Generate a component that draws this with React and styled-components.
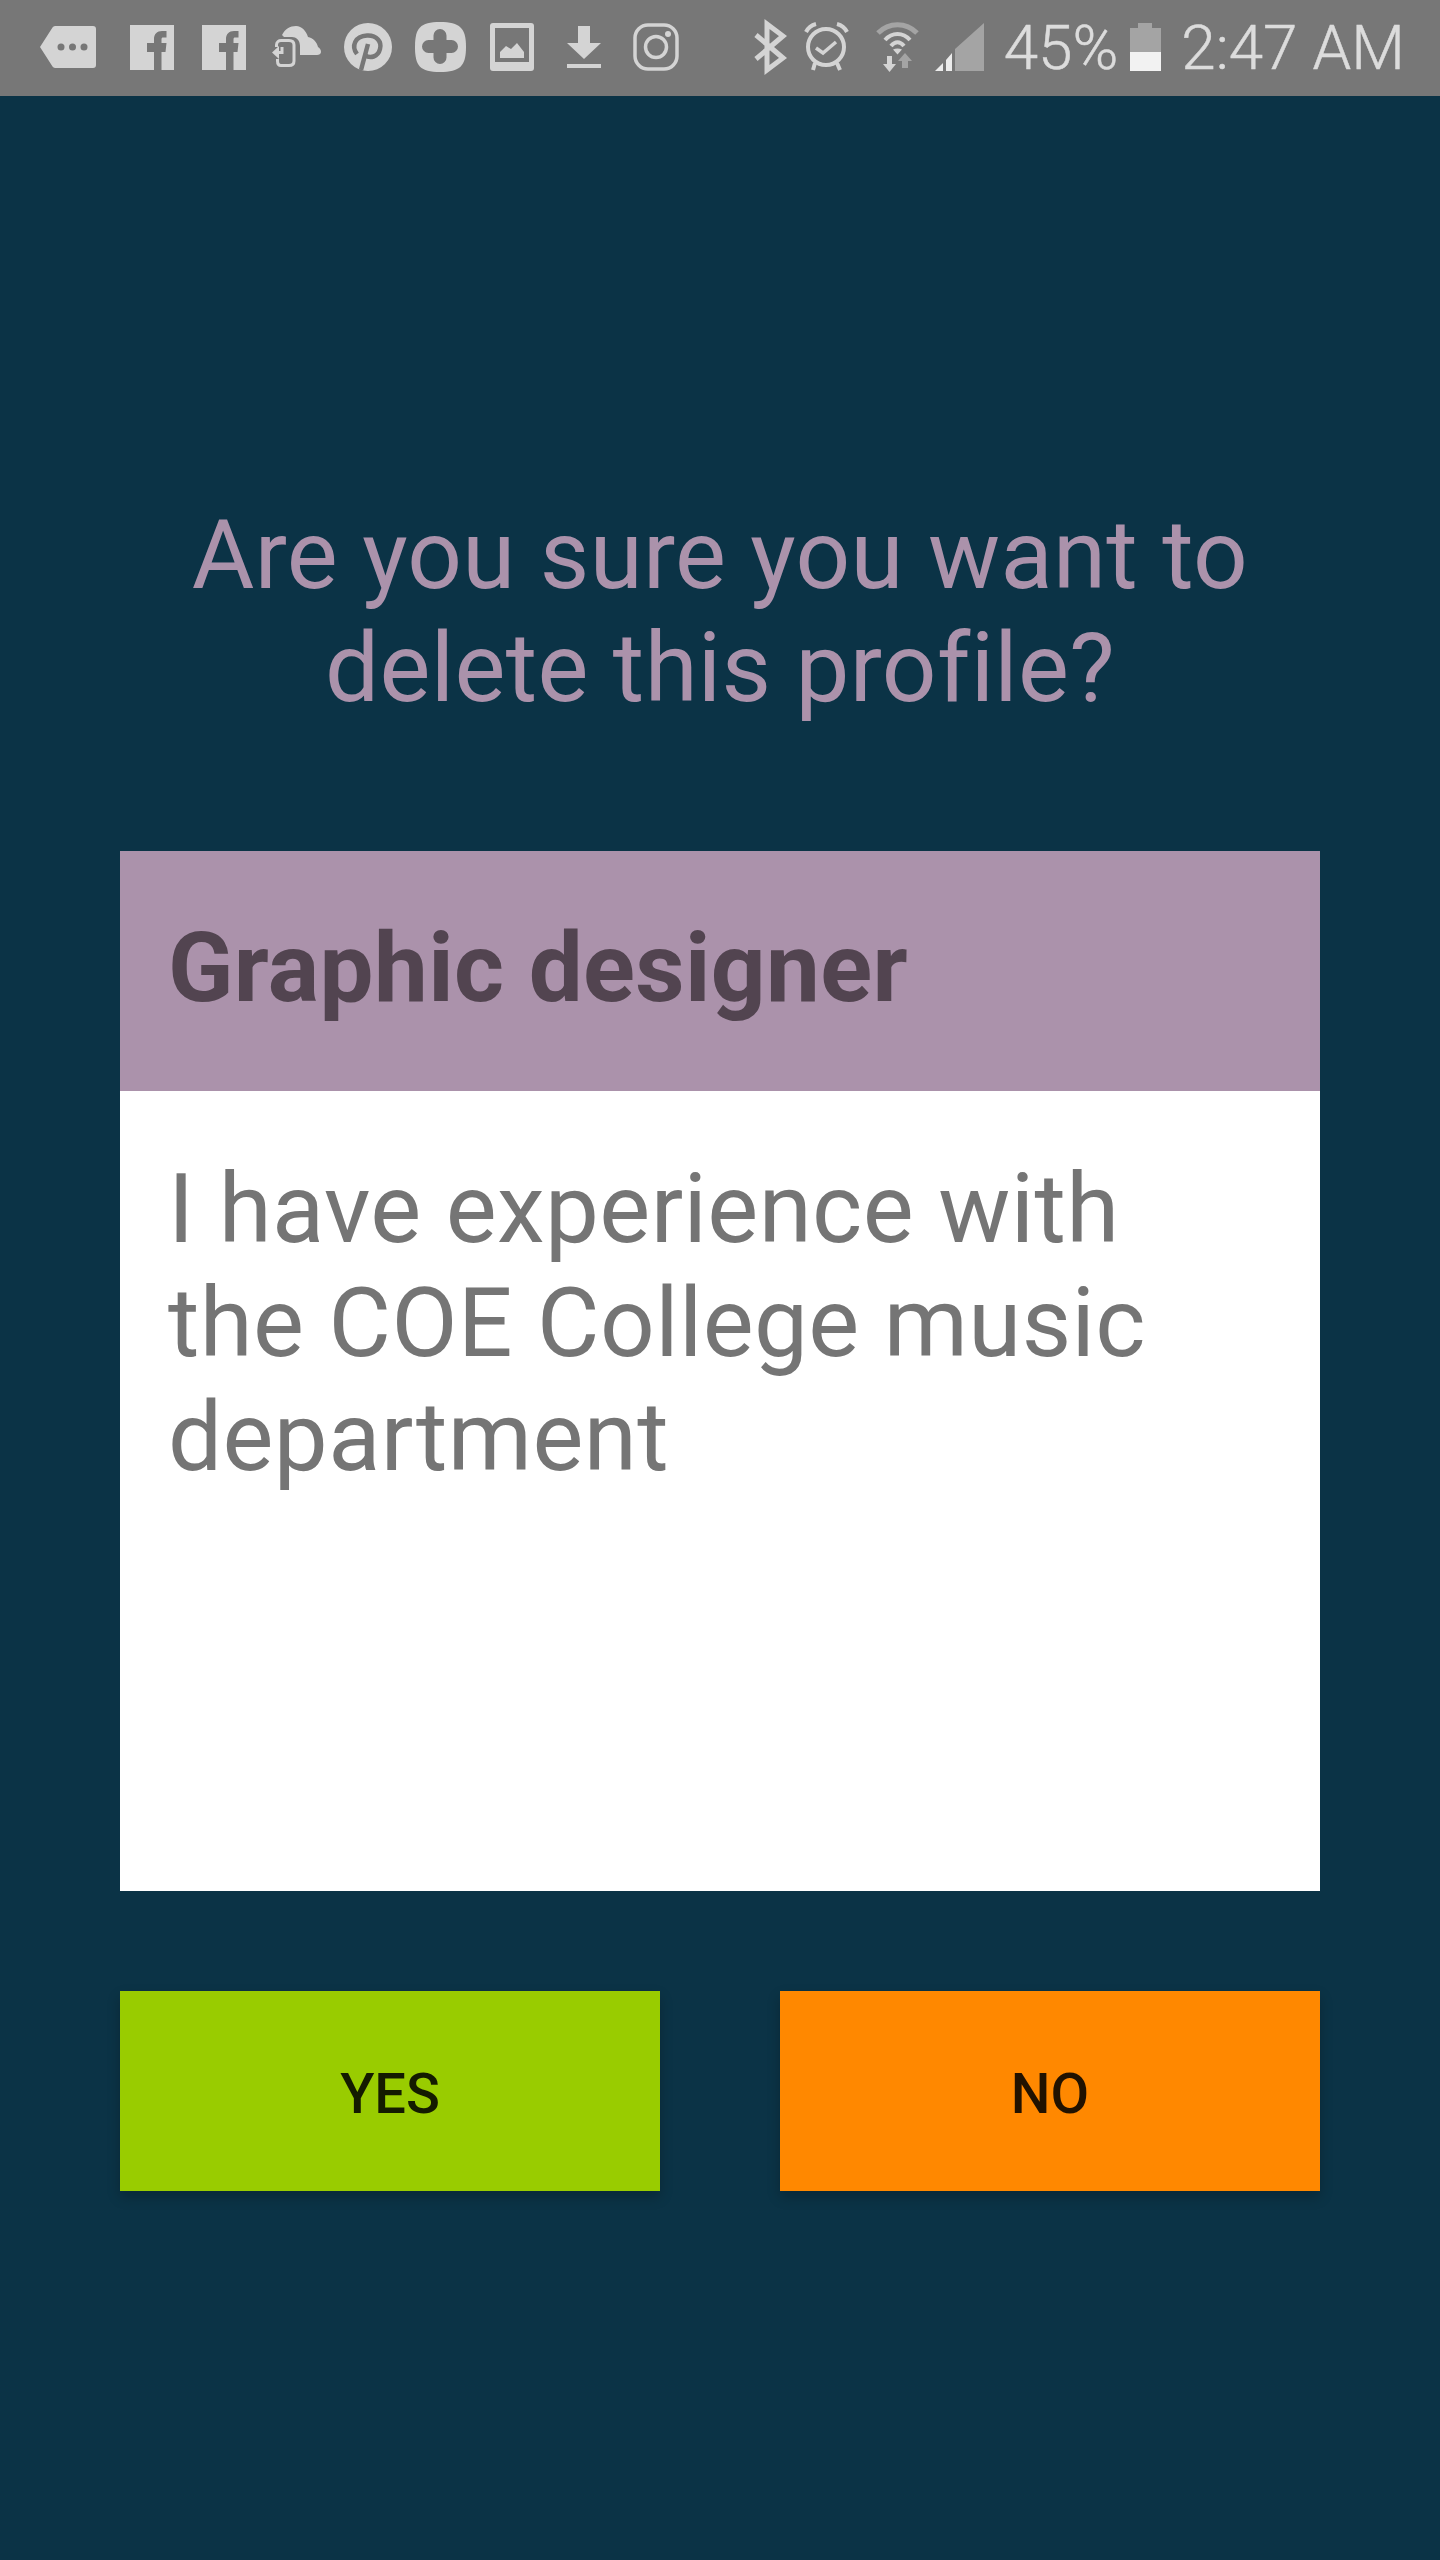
import React from 'react';
import styled, { createGlobalStyle } from 'styled-components';

const Global = createGlobalStyle`
  html, body { margin: 0; padding: 0; background: #0b3346; }
  body { font-family: Roboto, "Liberation Sans", sans-serif; }
`;
const Page = styled.div`
  width: 1440px; height: 2560px; background: #0b3346; overflow: hidden;
  display: flex; flex-direction: column;
`;
const StatusBar = styled.div`
  height: 96px; flex: none; background: #777777; display: flex; align-items: center;
  padding: 0 35px 0 32px; box-sizing: border-box;
`;
const IconGroup = styled.div`display: flex; align-items: center;`;
const Tray = styled(IconGroup)`margin-left: auto;`;
const Glyph = styled.svg`
  flex: none; display: block; width: ${p => p.$w || 72}px; height: 72px;
  margin-left: ${p => p.$ml || 0}px; margin-right: ${p => p.$mr || 0}px;
  fill: #d4d4d4;
`;
const StatusText = styled.span`
  font-size: 62px; font-weight: 300; line-height: 72px; color: #dcdcdc; white-space: nowrap;
  margin-left: ${p => p.$ml || 0}px; -webkit-text-stroke: .5px #dcdcdc;
`;
const Main = styled.main`
  flex: 1; display: flex; flex-direction: column; padding: 0 120px;
`;
const Question = styled.h1`
  margin: 403px 0 0; height: 352px; font-size: 96px; line-height: 113px; font-weight: 400;
  letter-spacing: .35px; text-align: center; color: #ab92ab; white-space: nowrap;
`;
const Card = styled.section`display: flex; flex-direction: column; height: 1040px;`;
const CardHeader = styled.div`
  height: 240px; background: #ab92ab; padding: 0 48px 6px; box-sizing: border-box; display: flex; align-items: center;
  font-size: 96px; font-weight: 700; letter-spacing: .4px; color: #524450;
`;
const CardBody = styled.div`
  flex: 1; background: #fff; padding: 61px 48px 0; font-size: 96px; line-height: 114px;
  letter-spacing: .4px; color: #757575;
`;
const Actions = styled.div`display: flex; justify-content: space-between; margin-top: 100px;`;
const ActionButton = styled.button`
  width: 540px; height: 200px; border: 0; padding: 6px 0 0; background: ${p => p.$bg};
  font-family: inherit; font-size: 56px; font-weight: 500; color: rgba(0,0,0,.87);
  box-shadow: 0 6px 12px rgba(0,0,0,.22);
`;

const Fb = () => (
  <Glyph viewBox="116 12 72 72">
    <path fillRule="evenodd" d="M130 25h44v45h-44zM154 70V52h-7v-9h7v-4c0-5 3-8 8-8h4.500v6.500H163c-1 0-1.500.5-1.500 2V43h5l-1 9h-4v18z"/>
  </Glyph>
);

export default function App() {
  return (
    <Page>
      <Global />
      <StatusBar>
        <IconGroup>
          <Glyph viewBox="32 12 72 72" $mr={12}>
            <path d="M53 26H93a3 3 0 0 1 3 3V65a3 3 0 0 1-3 3H55a3 3 0 0 1-2.500-1.500L40 47l12.500-19.500A3 3 0 0 1 55 26z" />
            <circle cx="61" cy="47" r="3.500" fill="#777"/><circle cx="72.500" cy="47" r="3.500" fill="#777"/><circle cx="84" cy="47" r="3.500" fill="#777"/>
          </Glyph>
          <Fb /><Fb />
          <Glyph viewBox="260 12 72 72">
            <path d="M282 35C285 29 290 26 296 26C302 26 306 31 308 37C313 38 317 42 318 47C320 48 321 50 321 52C321 54 319 55 317 55H300V46C300 40 296 37 292 37H284z"/>
            <path fill="none" stroke="#d4d4d4" strokeWidth="3" d="M276.500 47V45C276.500 42 279 40.500 281 40.500H289C292 40.500 294 42 294 45V61C294 64 292 65.500 289 65.500H281C279 65.500 277.500 64 277.500 61V59"/>
            <path d="M272 52.500L279 46V59z"/>
            <path fill="none" stroke="#d4d4d4" strokeWidth="3" d="M282 47V52.500H277"/>
          </Glyph>
          <Glyph viewBox="332 12 72 72">
            <circle cx="368" cy="47" r="24"/>
            <path fill="none" stroke="#777" strokeWidth="4.500" d="M357 54C351 46 355 36 367 35.500C377 35 382 42 380 49C378 57 370 59 365 55"/>
            <path fill="none" stroke="#777" strokeWidth="4.500" d="M368 44L361 70"/>
          </Glyph>
          <Glyph viewBox="404 12 72 72">
            <path d="M440 22C460 22 466 28 466 47C466 66 460 72 440 72C420 72 415 66 415 47C415 28 420 22 440 22z"/>
            <path fill="none" stroke="#777" strokeWidth="13" strokeLinecap="round" d="M440 35.500V57.500M428.500 46.500H451.500"/>
          </Glyph>
          <Glyph viewBox="476 12 72 72">
            <path fillRule="evenodd" d="M493 23h38a3 3 0 0 1 3 3v42a3 3 0 0 1-3 3H493a3 3 0 0 1-3-3V26a3 3 0 0 1 3-3zM495 28v34h34V28z"/>
            <path d="M500 58V52L506 46L511 49L517 43L524 52V58z"/>
          </Glyph>
          <Glyph viewBox="548 12 72 72">
            <path d="M578 26h12v17h11L584 59 567 43h11zM567 64h34v4H567z"/>
          </Glyph>
          <Glyph viewBox="620 12 72 72">
            <rect x="635" y="25" width="42" height="44" rx="13" fill="none" stroke="#d4d4d4" strokeWidth="3.500"/>
            <circle cx="656" cy="47" r="10.500" fill="none" stroke="#d4d4d4" strokeWidth="3.500"/>
            <circle cx="668" cy="34" r="3"/>
          </Glyph>
        </IconGroup>
        <Tray>
          <Glyph viewBox="752 12 40 72" $w={40} $mr={12}>
            <path fill="none" stroke="#d4d4d4" strokeWidth="5" strokeLinejoin="miter" d="M757 35L784 58L768 70V24L784 36L757 59"/>
          </Glyph>
          <Glyph viewBox="804 12 48 72" $w={48} $mr={23}>
            <circle cx="827" cy="47" r="18" fill="none" stroke="#d4d4d4" strokeWidth="4"/>
            <path fill="none" stroke="#d4d4d4" strokeWidth="3.500" d="M817 48L824 53L837 42"/>
            <path fill="none" stroke="#d4d4d4" strokeWidth="4" d="M807 32C809 28 813 25 817 24M848 32C846 28 842 25 838 24M816 63L814 70M838 63L841 70"/>
          </Glyph>
          <Glyph viewBox="875 12 46 72" $w={46} $mr={13}>
            <path fill="none" stroke="#a4a4a4" strokeWidth="5" d="M879 33C890 22 907 22 918 33"/>
            <path fill="none" stroke="#d4d4d4" strokeWidth="4" d="M886 40C893 32 904 32 911 40M892 46C896 41 901 41 905 46"/>
            <path d="M894 49.500Q898.500 47.500 903 49.500L898.500 54.500zM888 56h5v8h4l-6.500 8L884 64h4z"/>
            <path fill="#a4a4a4" d="M903 68V61h-4l7-8 7 8h-4v7z"/>
          </Glyph>
          <Glyph viewBox="934 12 53 72" $w={53}>
            <path fill="#a4a4a4" d="M985 23V71H956V49z"/>
            <path fill="#ececec" d="M936 71L944 63V71zM947 71V60L953 53V71z"/>
          </Glyph>
          <StatusText $ml={18}>45%</StatusText>
          <Glyph viewBox="1130 12 31 72" $w={31} $ml={12} $mr={20}>
            <path fill="#a4a4a4" d="M1138 23h14v5h9v24h-31V28h8z"/>
            <path fill="#f2f2f2" d="M1130 52h31v19h-31z"/>
          </Glyph>
          <StatusText>2:47 AM</StatusText>
        </Tray>
      </StatusBar>
      <Main>
        <Question>Are you sure you want to<br/>delete this profile?</Question>
        <Card>
          <CardHeader>Graphic designer</CardHeader>
          <CardBody>I have experience with<br/>the COE College music<br/>department</CardBody>
        </Card>
        <Actions>
          <ActionButton $bg="#99cc00">YES</ActionButton>
          <ActionButton $bg="#ff8800">NO</ActionButton>
        </Actions>
      </Main>
    </Page>
  );
}
